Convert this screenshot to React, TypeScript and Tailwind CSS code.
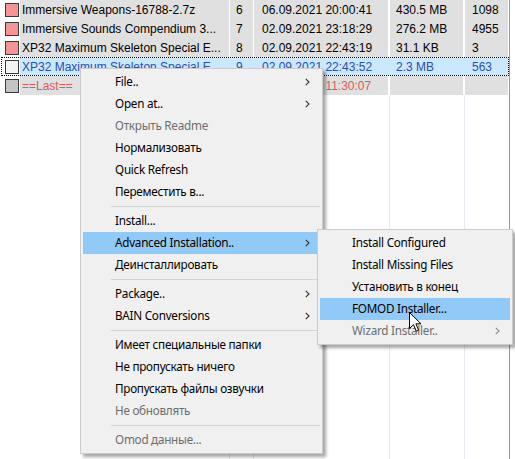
import React from 'react'

type Row = {
  name: string
  num: string
  date: string
  size: string
  count: string
  swatch: string
  kind?: 'normal' | 'selected' | 'last'
}

const rows: Row[] = [
  { name: 'Immersive Weapons-16788-2.7z', num: '6', date: '06.09.2021 20:00:41', size: '430.5 MB', count: '1098', swatch: 'bg-[#f59494]' },
  { name: 'Immersive Sounds Compendium 3...', num: '7', date: '02.09.2021 23:18:29', size: '276.2 MB', count: '4955', swatch: 'bg-[#f59494]' },
  { name: 'XP32 Maximum Skeleton Special E...', num: '8', date: '02.09.2021 22:43:19', size: '31.1 KB', count: '3', swatch: 'bg-[#f59494]' },
  { name: 'XP32 Maximum Skeleton Special E...', num: '9', date: '02.09.2021 22:43:52', size: '2.3 MB', count: '563', swatch: 'bg-[#f4f4f4]', kind: 'selected' },
  { name: '==Last==', num: '', date: '02.09.2021 11:30:07', size: '', count: '', swatch: 'bg-[#c4c4c4]', kind: 'last' },
]

type Item = { t?: string; arrow?: boolean; disabled?: boolean; active?: boolean; sep?: boolean }

const mainMenu: Item[] = [
  { t: 'File..', arrow: true },
  { t: 'Open at..', arrow: true },
  { t: 'Открыть Readme', disabled: true },
  { t: 'Нормализовать' },
  { t: 'Quick Refresh' },
  { t: 'Переместить в...' },
  { sep: true },
  { t: 'Install...' },
  { t: 'Advanced Installation..', arrow: true, active: true },
  { t: 'Деинсталлировать' },
  { sep: true },
  { t: 'Package..', arrow: true },
  { t: 'BAIN Conversions', arrow: true },
  { sep: true },
  { t: 'Имеет специальные папки' },
  { t: 'Не пропускать ничего' },
  { t: 'Пропускать файлы озвучки' },
  { t: 'Не обновлять', disabled: true },
  { sep: true },
  { t: 'Omod данные...', disabled: true },
]

const subMenu: Item[] = [
  { t: 'Install Configured' },
  { t: 'Install Missing Files' },
  { t: 'Установить в конец' },
  { t: 'FOMOD Installer...', active: true },
  { t: 'Wizard Installer..', arrow: true, disabled: true },
]

function Chevron({ color }: { color: string }) {
  return (
    <svg width="5" height="8" viewBox="0 0 5 8" className="shrink-0">
      <path d="M0.8 0.8 L4 4 L0.8 7.2" fill="none" stroke={color} strokeWidth="1.1" />
    </svg>
  )
}

function MenuList({ items }: { items: Item[] }) {
  return (
    <>
      {items.map((it, i) =>
        it.sep ? (
          <div key={i} className="h-[7px] flex items-center pl-[28px]">
            <div className="h-px w-full bg-[#d4d4d4]" />
          </div>
        ) : (
          <div
            key={i}
            className={`h-[22px] flex items-center justify-between pl-[32px] pr-[10px] ${
              it.active ? 'bg-[#91c9f7]' : ''
            } ${it.disabled ? 'text-[#6d6d6d]' : 'text-black'}`}
          >
            <span className="whitespace-nowrap">{it.t}</span>
            {it.arrow && <Chevron color={it.disabled ? '#8a8a8a' : '#333333'} />}
          </div>
        )
      )}
    </>
  )
}

function TableRow({ row }: { row: Row }) {
  const selected = row.kind === 'selected'
  const cell = selected ? '' : 'bg-[#e0e0e0]'
  const color = row.kind === 'last' ? 'text-[#dc5a5a]' : selected ? 'text-[#2a4fa6]' : 'text-black'
  return (
    <div
      className={`flex h-[19px] items-stretch whitespace-nowrap ${color} ${
        selected ? 'ml-px w-[508px] border border-dotted border-black' : ''
      }`}
    >
      <div className={`flex items-center bg-white ${selected ? 'w-[18px] pl-[3px]' : 'w-[20px] pl-[5px]'}`}>
        <div className={`w-[14px] h-[14px] border border-[#3a3a3a] ${row.swatch}`} />
      </div>
      <div className={`flex ${selected ? 'bg-[#cce8ff]' : ''}`}>
        <div className={`w-[209px] pl-[2px] flex items-center overflow-hidden ${cell}`}>{row.name}</div>
        <div className={`ml-px w-[23px] pl-[6px] flex items-center ${cell}`}>{row.num}</div>
        <div className={`ml-px w-[134px] pl-[8px] flex items-center ${cell}`}>{row.date}</div>
        <div className={`ml-[2px] w-[73px] pl-[6px] flex items-center ${cell}`}>{row.size}</div>
        <div className={`ml-[2px] w-[43px] pl-[7px] flex items-center ${cell}`}>{row.count}</div>
      </div>
    </div>
  )
}

export default function App() {
  return (
    <div className="relative w-[515px] h-[459px] overflow-hidden bg-white font-['Liberation_Sans',Arial,sans-serif] text-[12px]">
      {/* installers list */}
      <div className="flex h-full">
        <div className="w-[509px] flex flex-col">
          {rows.map((r, i) => (
            <TableRow key={i} row={r} />
          ))}
          <div className="flex flex-1">
            <div className="w-[230px] border-r border-[#e5ebf1]" />
            <div className="w-[24px] border-r border-[#e5ebf1]" />
            <div className="w-[136px] border-r border-[#e5ebf1]" />
            <div className="w-[75px] border-r border-[#e5ebf1]" />
          </div>
        </div>
        <div className="w-px bg-[#9a9a9a]" />
      </div>

      {/* context menu */}
      <div className="absolute left-[80px] top-[68px] w-[243px] border border-[#cccccc] bg-[#f0f0f0] p-[2px] font-['Noto_Sans',sans-serif] text-[11.7px] tracking-[-0.25px] shadow-[3px_3px_3px_rgba(0,0,0,0.35)]">
        <MenuList items={mainMenu} />
      </div>

      {/* submenu */}
      <div className="absolute left-[317px] top-[229px] w-[196px] border border-[#cccccc] bg-[#f0f0f0] p-[2px] font-['Noto_Sans',sans-serif] text-[11.7px] tracking-[-0.25px] shadow-[3px_3px_3px_rgba(0,0,0,0.35)]">
        <MenuList items={subMenu} />
      </div>

      {/* mouse pointer */}
      <svg className="absolute left-[409px] top-[312px]" width="13" height="21" viewBox="0 0 13 21">
        <path
          d="M0.5 0.5 L0.5 16.5 L4.5 12.7 L7.3 19.2 L9.6 18.2 L6.9 11.8 L12 11.8 Z"
          fill="#ffffff"
          stroke="#000000"
          strokeWidth="1"
          strokeLinejoin="miter"
        />
      </svg>
    </div>
  )
}
